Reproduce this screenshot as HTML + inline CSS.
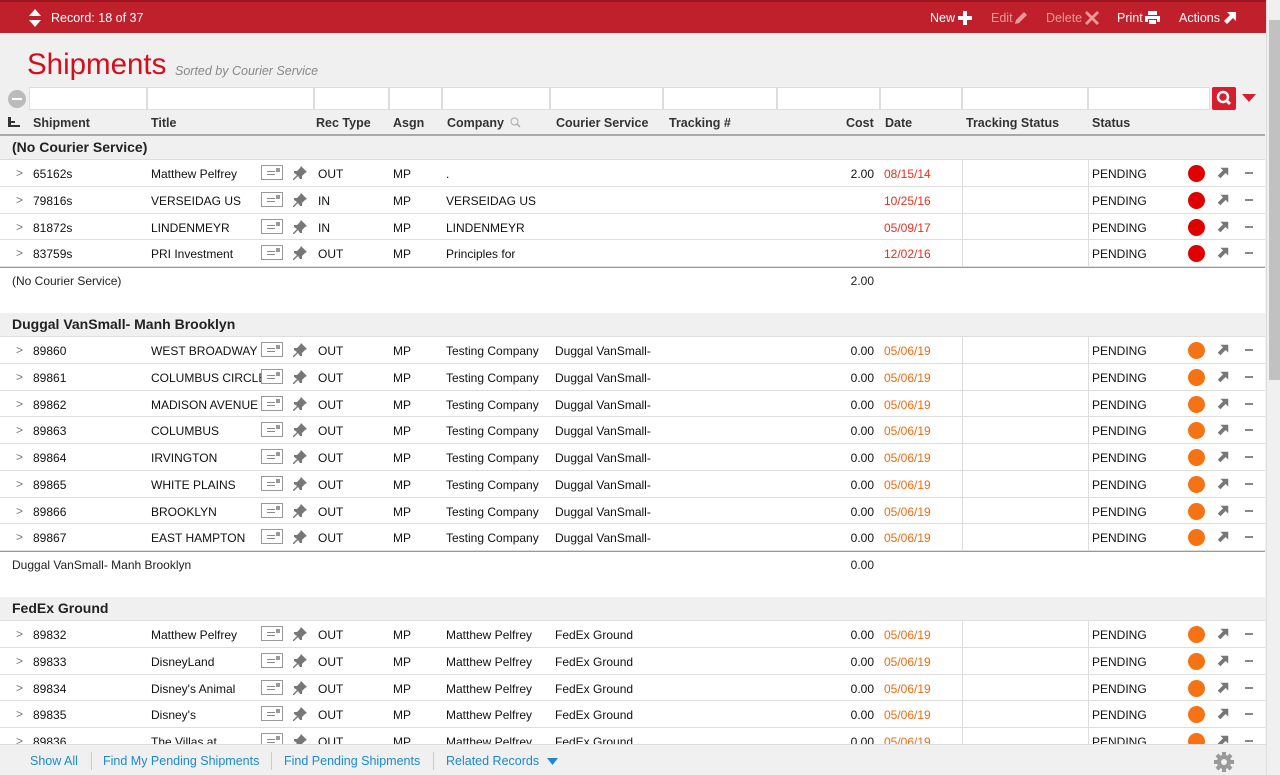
<!DOCTYPE html>
<html><head><meta charset="utf-8"><style>
*{box-sizing:border-box;margin:0;padding:0}
body{width:1280px;height:775px;overflow:hidden;background:#f0f0f0;font-family:"Liberation Sans","DejaVu Sans",sans-serif;font-size:12.5px;color:#222;position:relative}
.top{position:absolute;left:0;top:0;width:1266px;height:33px;background:#c0202c;border-top:2px solid #9d1520;color:#fff}
.top span{position:absolute;top:9px;font-size:12.5px}
.sb{position:absolute;right:0;top:0;width:14px;height:775px;background:#f0f0f0;border-left:1px solid #ddd}
.sb .th{position:absolute;left:2px;top:20px;width:11px;height:360px;background:#c1c1c1}
h1{position:absolute;left:27px;top:48px;font-weight:normal;font-size:29.5px;color:#d0101c}
.sort{position:absolute;left:175px;top:64px;font-style:italic;color:#888;font-size:12.5px}
.flt{position:absolute;top:87px;height:23px;background:#fff;border:1px solid #ddd}
.hdr{position:absolute;top:111px;left:0;width:1265px;height:25px;border-bottom:2px solid #aaa;font-weight:bold;color:#333}
.hdr b,.r b,.r i{position:absolute;font-style:normal;white-space:nowrap}
.hdr b{top:5px}
.list{position:absolute;top:136px;left:0;width:1265px}
.g{height:24px;background:#f0f0f0;font-weight:bold;font-size:14px;padding:3px 0 0 12px;border-bottom:1px solid #ddd}
.r{position:relative;height:26.75px;background:#fff;border-bottom:1px solid #ddd;font-size:12px}
.r b{top:7px;font-weight:normal;color:#111}
.a{left:16px;top:6px;color:#777}
.s{left:33px}.t{left:151px}.rt{left:318px}.as{left:393px}.co{left:446px}.cs{left:555px}
.cost{right:391px}.dt{left:884px;color:#e8301c!important}.st{left:1092px}
.r .o{color:#f06a10!important}
.r .v1,.r .v2{top:0;height:26px;width:1px;background:#ddd}
.v1{left:962px}.v2{left:1088px}
.n{left:261px;top:5px;width:22px;height:15px;border:1px solid #999;background:#fff}
.n:before{content:"";position:absolute;left:5px;top:5px;width:8px;height:1px;background:#888;box-shadow:0 3px 0 #888}
.n:after{content:"";position:absolute;right:2px;top:2px;width:4px;height:4px;background:#999}
.pn{left:292px;top:5px}
.dot{left:1188px;top:5px;width:17px;height:17px;border-radius:50%;background:#e00000}
.dot.or{background:#f57314}
.ar{left:1216px;top:6px}
.mn{left:1245px;top:12px;width:8px;height:2px;background:#888}
.sub{height:46px;background:#fff;border-top:1px solid #999;position:relative;font-size:12px}
.sub b{position:absolute;top:6px;font-weight:normal}
.foot{position:absolute;left:0;top:744px;width:1266px;height:31px;background:#f0f0f0;border-top:1px solid #ddd;color:#1a8ad0}
.foot span{position:absolute;top:9px}
.foot i{position:absolute;top:7px;width:1px;height:18px;background:#ccc}
</style></head><body>
<svg width="0" height="0" style="position:absolute"><defs>
<symbol id="pin" viewBox="0 0 16 16"><path d="M9 1l6 6-2 1-3 3 0 3-2 0-2-3-4 4-1 0 0-1 4-4-3-2 0-2 3 0 3-3z" fill="#777"/></symbol>
<symbol id="arr" viewBox="0 0 16 16"><path d="M5 2h9v9l-3-3-6 6-3-3 6-6z" fill="#777"/></symbol>
</defs></svg>
<div class="top">
<svg style="position:absolute;left:28px;top:6px" width="14" height="20"><path d="M7 1l6 7H1z M7 19l6-7H1z" fill="#fff"/></svg>
<span style="left:51px">Record: 18 of 37</span>
<span style="left:930px">New</span><svg style="position:absolute;left:958px;top:9px" width="14" height="14"><path d="M5 0h4v5h5v4H9v5H5V9H0V5h5z" fill="#fff"/></svg>
<span style="left:991px;color:#e99">Edit</span><svg style="position:absolute;left:1014px;top:9px" width="14" height="14"><path d="M10 1l3 3-8 8-4 1 1-4z" fill="#e99"/></svg>
<span style="left:1046px;color:#e99">Delete</span><svg style="position:absolute;left:1085px;top:9px" width="14" height="14"><path d="M2 0l5 5 5-5 2 2-5 5 5 5-2 2-5-5-5 5-2-2 5-5-5-5z" fill="#e99"/></svg>
<span style="left:1117px">Print</span><svg style="position:absolute;left:1145px;top:8px" width="15" height="15"><path d="M3 1h9v4H3z M0 6h15v6h-3v-3H3v3H0z M4 10h7v4H4z" fill="#fff"/></svg>
<span style="left:1179px">Actions</span><svg style="position:absolute;left:1222px;top:8px" width="15" height="15"><path d="M5 2h9v9l-3-3-6 6-3-3 6-6z" fill="#fff"/></svg>
</div>
<div class="sb"><div class="th"></div></div>
<h1>Shipments</h1><div class="sort">Sorted by Courier Service</div>
<div style="position:absolute;left:8px;top:90px;width:18px;height:18px;border-radius:50%;background:#bbb"><div style="position:absolute;left:4px;top:8px;width:10px;height:2px;background:#fff"></div></div>
<div class="flt" style="left:29px;width:118px"></div><div class="flt" style="left:147px;width:167px"></div><div class="flt" style="left:314px;width:75px"></div><div class="flt" style="left:389px;width:53px"></div><div class="flt" style="left:442px;width:108px"></div><div class="flt" style="left:550px;width:113px"></div><div class="flt" style="left:663px;width:114px"></div><div class="flt" style="left:777px;width:103px"></div><div class="flt" style="left:880px;width:82px"></div><div class="flt" style="left:962px;width:126px"></div><div class="flt" style="left:1088px;width:122px"></div>
<div style="position:absolute;left:1212px;top:87px;width:24px;height:23px;background:#d81e2c;border-radius:2px"><svg width="24" height="23"><circle cx="11" cy="10" r="5" stroke="#fff" stroke-width="2.5" fill="none"/><path d="M14 13l4 4" stroke="#fff" stroke-width="3"/></svg></div>
<svg style="position:absolute;left:1242px;top:94px" width="14" height="9"><path d="M0 0h14L7 8z" fill="#d81e2c"/></svg>
<div class="hdr">
<svg style="position:absolute;left:8px;top:6px" width="12" height="10"><path d="M0 0h3v10H0z M0 4h7v2H0z M0 8h12v2H0z" fill="#333"/></svg>
<b style="left:33px">Shipment</b><b style="left:151px">Title</b><b style="left:316px">Rec Type</b><b style="left:393px">Asgn</b><b style="left:447px">Company</b><svg style="position:absolute;left:510px;top:6px" width="11" height="11"><circle cx="4.5" cy="4.5" r="3.5" stroke="#aaa" fill="none"/><path d="M7 7l3 3" stroke="#aaa" stroke-width="1.5"/></svg><b style="left:556px">Courier Service</b><b style="left:669px">Tracking #</b><b style="left:846px">Cost</b><b style="left:885px">Date</b><b style="left:966px">Tracking Status</b><b style="left:1092px">Status</b>
</div>
<div class="list">
<div class="g">(No Courier Service)</div>
<div class="r"><i class="a">&gt;</i><b class="s">65162s</b><b class="t">Matthew Pelfrey</b><i class="n"></i><svg class="pn" style="position:absolute" width="16" height="16"><use href="#pin"/></svg><b class="rt">OUT</b><b class="as">MP</b><b class="co">.</b><b class="cost">2.00</b><b class="dt">08/15/14</b><i class="v1"></i><i class="v2"></i><b class="st">PENDING</b><i class="dot"></i><svg class="ar" style="position:absolute" width="14" height="14"><use href="#arr"/></svg><i class="mn"></i></div>
<div class="r"><i class="a">&gt;</i><b class="s">79816s</b><b class="t">VERSEIDAG US</b><i class="n"></i><svg class="pn" style="position:absolute" width="16" height="16"><use href="#pin"/></svg><b class="rt">IN</b><b class="as">MP</b><b class="co">VERSEIDAG US</b><b class="dt">10/25/16</b><i class="v1"></i><i class="v2"></i><b class="st">PENDING</b><i class="dot"></i><svg class="ar" style="position:absolute" width="14" height="14"><use href="#arr"/></svg><i class="mn"></i></div>
<div class="r"><i class="a">&gt;</i><b class="s">81872s</b><b class="t">LINDENMEYR</b><i class="n"></i><svg class="pn" style="position:absolute" width="16" height="16"><use href="#pin"/></svg><b class="rt">IN</b><b class="as">MP</b><b class="co">LINDENMEYR</b><b class="dt">05/09/17</b><i class="v1"></i><i class="v2"></i><b class="st">PENDING</b><i class="dot"></i><svg class="ar" style="position:absolute" width="14" height="14"><use href="#arr"/></svg><i class="mn"></i></div>
<div class="r"><i class="a">&gt;</i><b class="s">83759s</b><b class="t">PRI Investment</b><i class="n"></i><svg class="pn" style="position:absolute" width="16" height="16"><use href="#pin"/></svg><b class="rt">OUT</b><b class="as">MP</b><b class="co">Principles for</b><b class="dt">12/02/16</b><i class="v1"></i><i class="v2"></i><b class="st">PENDING</b><i class="dot"></i><svg class="ar" style="position:absolute" width="14" height="14"><use href="#arr"/></svg><i class="mn"></i></div>
<div class="sub"><b style="left:12px">(No Courier Service)</b><b style="right:391px">2.00</b></div>
<div class="g">Duggal VanSmall- Manh Brooklyn</div>
<div class="r"><i class="a">&gt;</i><b class="s">89860</b><b class="t">WEST BROADWAY</b><i class="n"></i><svg class="pn" style="position:absolute" width="16" height="16"><use href="#pin"/></svg><b class="rt">OUT</b><b class="as">MP</b><b class="co">Testing Company</b><b class="cs">Duggal VanSmall-</b><b class="cost">0.00</b><b class="dt o">05/06/19</b><i class="v1"></i><i class="v2"></i><b class="st">PENDING</b><i class="dot or"></i><svg class="ar" style="position:absolute" width="14" height="14"><use href="#arr"/></svg><i class="mn"></i></div>
<div class="r"><i class="a">&gt;</i><b class="s">89861</b><b class="t">COLUMBUS CIRCLE</b><i class="n"></i><svg class="pn" style="position:absolute" width="16" height="16"><use href="#pin"/></svg><b class="rt">OUT</b><b class="as">MP</b><b class="co">Testing Company</b><b class="cs">Duggal VanSmall-</b><b class="cost">0.00</b><b class="dt o">05/06/19</b><i class="v1"></i><i class="v2"></i><b class="st">PENDING</b><i class="dot or"></i><svg class="ar" style="position:absolute" width="14" height="14"><use href="#arr"/></svg><i class="mn"></i></div>
<div class="r"><i class="a">&gt;</i><b class="s">89862</b><b class="t">MADISON AVENUE</b><i class="n"></i><svg class="pn" style="position:absolute" width="16" height="16"><use href="#pin"/></svg><b class="rt">OUT</b><b class="as">MP</b><b class="co">Testing Company</b><b class="cs">Duggal VanSmall-</b><b class="cost">0.00</b><b class="dt o">05/06/19</b><i class="v1"></i><i class="v2"></i><b class="st">PENDING</b><i class="dot or"></i><svg class="ar" style="position:absolute" width="14" height="14"><use href="#arr"/></svg><i class="mn"></i></div>
<div class="r"><i class="a">&gt;</i><b class="s">89863</b><b class="t">COLUMBUS</b><i class="n"></i><svg class="pn" style="position:absolute" width="16" height="16"><use href="#pin"/></svg><b class="rt">OUT</b><b class="as">MP</b><b class="co">Testing Company</b><b class="cs">Duggal VanSmall-</b><b class="cost">0.00</b><b class="dt o">05/06/19</b><i class="v1"></i><i class="v2"></i><b class="st">PENDING</b><i class="dot or"></i><svg class="ar" style="position:absolute" width="14" height="14"><use href="#arr"/></svg><i class="mn"></i></div>
<div class="r"><i class="a">&gt;</i><b class="s">89864</b><b class="t">IRVINGTON</b><i class="n"></i><svg class="pn" style="position:absolute" width="16" height="16"><use href="#pin"/></svg><b class="rt">OUT</b><b class="as">MP</b><b class="co">Testing Company</b><b class="cs">Duggal VanSmall-</b><b class="cost">0.00</b><b class="dt o">05/06/19</b><i class="v1"></i><i class="v2"></i><b class="st">PENDING</b><i class="dot or"></i><svg class="ar" style="position:absolute" width="14" height="14"><use href="#arr"/></svg><i class="mn"></i></div>
<div class="r"><i class="a">&gt;</i><b class="s">89865</b><b class="t">WHITE PLAINS</b><i class="n"></i><svg class="pn" style="position:absolute" width="16" height="16"><use href="#pin"/></svg><b class="rt">OUT</b><b class="as">MP</b><b class="co">Testing Company</b><b class="cs">Duggal VanSmall-</b><b class="cost">0.00</b><b class="dt o">05/06/19</b><i class="v1"></i><i class="v2"></i><b class="st">PENDING</b><i class="dot or"></i><svg class="ar" style="position:absolute" width="14" height="14"><use href="#arr"/></svg><i class="mn"></i></div>
<div class="r"><i class="a">&gt;</i><b class="s">89866</b><b class="t">BROOKLYN</b><i class="n"></i><svg class="pn" style="position:absolute" width="16" height="16"><use href="#pin"/></svg><b class="rt">OUT</b><b class="as">MP</b><b class="co">Testing Company</b><b class="cs">Duggal VanSmall-</b><b class="cost">0.00</b><b class="dt o">05/06/19</b><i class="v1"></i><i class="v2"></i><b class="st">PENDING</b><i class="dot or"></i><svg class="ar" style="position:absolute" width="14" height="14"><use href="#arr"/></svg><i class="mn"></i></div>
<div class="r"><i class="a">&gt;</i><b class="s">89867</b><b class="t">EAST HAMPTON</b><i class="n"></i><svg class="pn" style="position:absolute" width="16" height="16"><use href="#pin"/></svg><b class="rt">OUT</b><b class="as">MP</b><b class="co">Testing Company</b><b class="cs">Duggal VanSmall-</b><b class="cost">0.00</b><b class="dt o">05/06/19</b><i class="v1"></i><i class="v2"></i><b class="st">PENDING</b><i class="dot or"></i><svg class="ar" style="position:absolute" width="14" height="14"><use href="#arr"/></svg><i class="mn"></i></div>
<div class="sub"><b style="left:12px">Duggal VanSmall- Manh Brooklyn</b><b style="right:391px">0.00</b></div>
<div class="g">FedEx Ground</div>
<div class="r"><i class="a">&gt;</i><b class="s">89832</b><b class="t">Matthew Pelfrey</b><i class="n"></i><svg class="pn" style="position:absolute" width="16" height="16"><use href="#pin"/></svg><b class="rt">OUT</b><b class="as">MP</b><b class="co">Matthew Pelfrey</b><b class="cs">FedEx Ground</b><b class="cost">0.00</b><b class="dt o">05/06/19</b><i class="v1"></i><i class="v2"></i><b class="st">PENDING</b><i class="dot or"></i><svg class="ar" style="position:absolute" width="14" height="14"><use href="#arr"/></svg><i class="mn"></i></div>
<div class="r"><i class="a">&gt;</i><b class="s">89833</b><b class="t">DisneyLand</b><i class="n"></i><svg class="pn" style="position:absolute" width="16" height="16"><use href="#pin"/></svg><b class="rt">OUT</b><b class="as">MP</b><b class="co">Matthew Pelfrey</b><b class="cs">FedEx Ground</b><b class="cost">0.00</b><b class="dt o">05/06/19</b><i class="v1"></i><i class="v2"></i><b class="st">PENDING</b><i class="dot or"></i><svg class="ar" style="position:absolute" width="14" height="14"><use href="#arr"/></svg><i class="mn"></i></div>
<div class="r"><i class="a">&gt;</i><b class="s">89834</b><b class="t">Disney's Animal</b><i class="n"></i><svg class="pn" style="position:absolute" width="16" height="16"><use href="#pin"/></svg><b class="rt">OUT</b><b class="as">MP</b><b class="co">Matthew Pelfrey</b><b class="cs">FedEx Ground</b><b class="cost">0.00</b><b class="dt o">05/06/19</b><i class="v1"></i><i class="v2"></i><b class="st">PENDING</b><i class="dot or"></i><svg class="ar" style="position:absolute" width="14" height="14"><use href="#arr"/></svg><i class="mn"></i></div>
<div class="r"><i class="a">&gt;</i><b class="s">89835</b><b class="t">Disney's</b><i class="n"></i><svg class="pn" style="position:absolute" width="16" height="16"><use href="#pin"/></svg><b class="rt">OUT</b><b class="as">MP</b><b class="co">Matthew Pelfrey</b><b class="cs">FedEx Ground</b><b class="cost">0.00</b><b class="dt o">05/06/19</b><i class="v1"></i><i class="v2"></i><b class="st">PENDING</b><i class="dot or"></i><svg class="ar" style="position:absolute" width="14" height="14"><use href="#arr"/></svg><i class="mn"></i></div>
<div class="r"><i class="a">&gt;</i><b class="s">89836</b><b class="t">The Villas at</b><i class="n"></i><svg class="pn" style="position:absolute" width="16" height="16"><use href="#pin"/></svg><b class="rt">OUT</b><b class="as">MP</b><b class="co">Matthew Pelfrey</b><b class="cs">FedEx Ground</b><b class="cost">0.00</b><b class="dt o">05/06/19</b><i class="v1"></i><i class="v2"></i><b class="st">PENDING</b><i class="dot or"></i><svg class="ar" style="position:absolute" width="14" height="14"><use href="#arr"/></svg><i class="mn"></i></div>
</div>
<div class="foot">
<span style="left:30px">Show All</span><i style="left:91px"></i>
<span style="left:103px">Find My Pending Shipments</span><i style="left:271px"></i>
<span style="left:284px">Find Pending Shipments</span><i style="left:433px"></i>
<span style="left:446px">Related Records</span><svg style="position:absolute;left:547px;top:13px" width="11" height="7"><path d="M0 0h11L5.5 7z" fill="#1a8ad0"/></svg>
<svg style="position:absolute;left:1213px;top:6px" width="22" height="22" viewBox="0 0 22 22"><g fill="#999"><circle cx="11" cy="11" r="7"/><rect x="9" y="1" width="4" height="20"/><rect x="1" y="9" width="20" height="4"/><rect x="9" y="1" width="4" height="20" transform="rotate(45 11 11)"/><rect x="9" y="1" width="4" height="20" transform="rotate(-45 11 11)"/></g><circle cx="11" cy="11" r="3" fill="#f0f0f0"/></svg>
</div>
</body></html>
